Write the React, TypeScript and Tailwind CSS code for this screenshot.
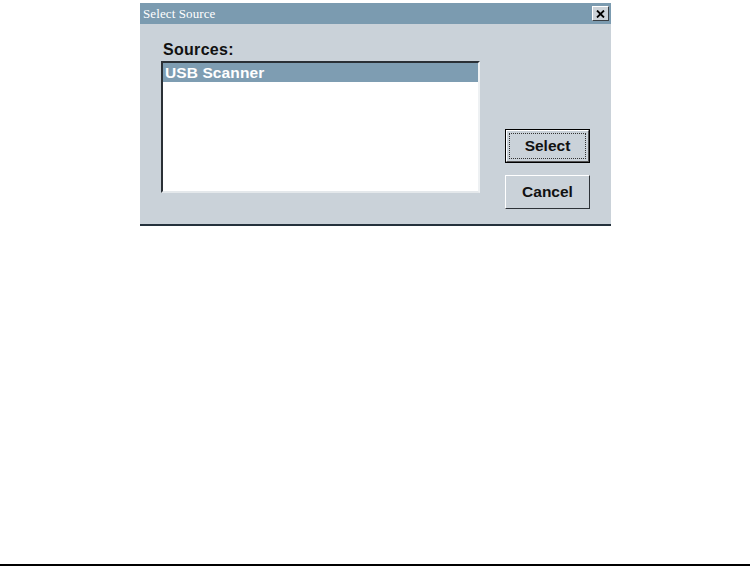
import React from 'react';

const sources = ['USB Scanner'];

const App: React.FC = () => {
  return (
    <div className="w-[750px] h-[578px] bg-white relative" style={{ fontFamily: '"Liberation Sans", Arial, sans-serif' }}>
      <div className="pt-[3px] pl-[140px]">
        {/* Dialog */}
        <div className="w-[471px] h-[223px] bg-[#cad2d9] flex flex-col border-b-2 border-[#24313c]">
          {/* Title bar */}
          <div className="h-[21px] bg-[#7b9bb0] flex items-center justify-between pl-[3px] pr-[2px]">
            <span
              className="text-white text-[13px] leading-none tracking-[0.1px]"
              style={{ fontFamily: '"Liberation Serif", "Times New Roman", serif' }}
            >
              Select Source
            </span>
            <button className="w-[17px] h-[15px] bg-[#ccd3d9] border border-t-white border-l-white border-r-[#3a3f44] border-b-[#3a3f44] flex items-center justify-center">
              <svg width="9" height="8" viewBox="0 0 9 8">
                <path d="M1 0.5 L8 7.5 M8 0.5 L1 7.5" stroke="#000" strokeWidth="1.8" />
              </svg>
            </button>
          </div>

          {/* Body */}
          <div className="flex flex-1">
            <div className="pl-[21px] pt-[16px] flex flex-col">
              <div className="h-[19px] text-[16px] font-bold text-[#111] leading-[19px] pl-[2px] tracking-[0.3px]">Sources:</div>
              <div className="mt-[2px] w-[319px] h-[132px] bg-white border-t-2 border-l-2 border-t-[#2a3036] border-l-[#2a3036] border-r-2 border-b-2 border-r-[#eef1f3] border-b-[#e4e8eb]">
                {sources.map((s) => (
                  <div key={s} className="h-[19px] bg-[#7e9db2] text-white text-[15.5px] font-bold leading-[19px] pl-[2px] tracking-[0.1px]">
                    {s}
                  </div>
                ))}
              </div>
            </div>

            <div className="ml-[25px] pt-[105px] flex flex-col gap-[12px]">
              <button className="w-[85px] h-[34px] border border-black bg-[#cad2d9] p-0">
                <div className="w-full h-full border border-t-white border-l-white border-r-[#555] border-b-[#555] p-[2px]">
                  <div className="w-full h-full border border-dotted border-[#333] flex items-center justify-center text-[15.5px] font-bold text-[#111]">
                    Select
                  </div>
                </div>
              </button>
              <button className="w-[85px] h-[34px] border border-t-white border-l-white border-r-[#2e3338] border-b-[#2e3338] bg-[#cad2d9] flex items-center justify-center text-[15.5px] font-bold text-[#111]">
                Cancel
              </button>
            </div>
          </div>
        </div>
      </div>

      {/* Bottom rule */}
      <div className="absolute left-0 right-0 top-[564px] h-[2px] bg-black" />
    </div>
  );
};

export default App;
